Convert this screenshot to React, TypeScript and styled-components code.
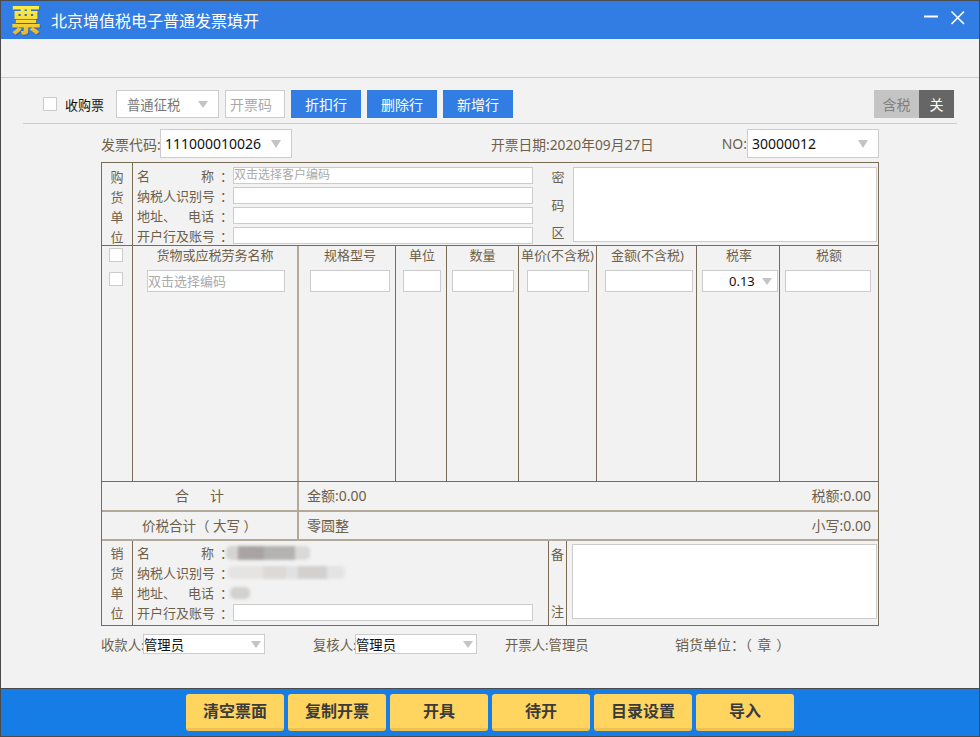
import { createGlobalStyle, styled } from 'styled-components'

const GlobalStyle = createGlobalStyle`
  html, body {
    margin: 0;
    padding: 0;
    background: #f2f2f2;
  }
  * {
    box-sizing: border-box;
  }
  body {
    font-family: "Noto Sans", "Noto Sans CJK SC", sans-serif;
    font-size: 13px;
    color: #6e5f4a;
  }
`

const LINE = '#7b6c55'
const SOFT_LINE = '#b3a999'

const Window = styled.div`
  width: 980px;
  height: 737px;
  display: flex;
  flex-direction: column;
  border: 1px solid #4a4a4a;
  background: #f2f2f2;
  overflow: hidden;
`

const TitleBar = styled.div`
  height: 38px;
  flex: none;
  display: flex;
  align-items: center;
  padding: 0 14px 0 10px;
  background: #317de3;
  color: #fff;
`

const Logo = styled.div`
  width: 30px;
  font-size: 30px;
  font-weight: 900;
  line-height: 38px;
  margin-right: 10px;
  background: linear-gradient(180deg, #fff44a 0%, #f7dc3a 50%, #e2a62c 100%);
  -webkit-background-clip: text;
  background-clip: text;
  color: transparent;
  filter: drop-shadow(1px 1px 0 rgba(60, 60, 60, 0.35));
`

const Title = styled.div`
  flex: 1;
  font-size: 16px;
`

const WindowIcons = styled.svg`
  display: block;
  margin-bottom: 4px;
`

const Band = styled.div`
  height: 39px;
  flex: none;
  border-bottom: 1px solid #cccccc;
`

const Toolbar = styled.div`
  height: 46px;
  margin: 0 22px;
  padding: 12px 3px 0 20px;
  flex: none;
  display: flex;
  align-items: flex-start;
  border-bottom: 1px solid #cccccc;
  font-size: 14px;
`

const CheckBox = styled.span`
  display: block;
  flex: none;
  width: 14px;
  height: 14px;
  background: #fff;
  border: 1px solid #cccccc;
`

const BuyLabel = styled.label`
  display: flex;
  align-items: center;
  gap: 8px;
  width: 73px;
  height: 28px;
  font-size: 13px;
  color: #111;
`

const Select = styled.div<{ $w: number; $h: number; $left: number; $right: number; $dark?: boolean; $size?: number }>`
  flex: none;
  width: ${(p) => p.$w}px;
  height: ${(p) => p.$h}px;
  display: flex;
  align-items: center;
  justify-content: space-between;
  padding: 0 ${(p) => p.$right}px 0 ${(p) => p.$left}px;
  background: #fff;
  border: 1px solid #cccccc;
  color: ${(p) => (p.$dark ? '#111' : '#777')};
  font-size: ${(p) => (p.$size ? `${p.$size}px` : 'inherit')};
`

const Caret = styled.i`
  display: block;
  flex: none;
  width: 0;
  height: 0;
  border-left: 5.5px solid transparent;
  border-right: 5.5px solid transparent;
  border-top: 8px solid #c4c4c4;
`

const SmallCaret = styled(Caret)`
  border-left-width: 5px;
  border-right-width: 5px;
  border-top-width: 7px;
`

const CodeInput = styled.div`
  width: 60px;
  height: 28px;
  margin: 0 6px;
  flex: none;
  display: flex;
  align-items: center;
  padding-left: 4px;
  background: #fff;
  border: 1px solid #cccccc;
  color: #aaaaaa;
`

const ToolButton = styled.button`
  width: 70px;
  height: 28px;
  margin-right: 6px;
  flex: none;
  border: 0;
  padding: 0;
  background: #317de3;
  color: #fff;
  font: inherit;
`

const Toggle = styled.div`
  margin-left: auto;
  height: 28px;
  display: flex;
`

const ToggleSide = styled.div<{ $on?: boolean }>`
  width: ${(p) => (p.$on ? 35 : 45)}px;
  display: flex;
  align-items: center;
  justify-content: center;
  background: ${(p) => (p.$on ? '#666666' : '#c4c4c4')};
  color: ${(p) => (p.$on ? '#fff' : '#808080')};
`

const Sheet = styled.div`
  width: 778px;
  margin-left: 100px;
  flex: 1;
`

const MetaRow = styled.div`
  height: 29px;
  margin-top: 5px;
  margin-bottom: 4px;
  display: flex;
  align-items: center;
  white-space: nowrap;
  font-size: 14px;
`

const MetaLabel = styled.div`
  width: 59px;
  flex: none;
`

const DateText = styled.div`
  margin-left: 199px;
  width: 231px;
  font-size: 13.75px;
`

const Invoice = styled.div`
  border: 1px solid ${LINE};
`

const PartyRow = styled.div<{ $h: number }>`
  height: ${(p) => p.$h}px;
  display: flex;
  border-bottom: 1px solid ${LINE};
  &:last-child {
    border-bottom: 0;
  }
`

const SideTitle = styled.div<{ $top: number }>`
  width: 31px;
  flex: none;
  display: flex;
  flex-direction: column;
  align-items: center;
  justify-content: space-between;
  padding: ${(p) => p.$top}px 0 3px;
  border-right: 1px solid ${LINE};
  line-height: 20px;
`

const Fields = styled.div<{ $w: number; $top: number }>`
  width: ${(p) => p.$w}px;
  flex: none;
  padding: ${(p) => p.$top}px 0 0 4px;
  display: flex;
  flex-direction: column;
  gap: 3px;
`

const Field = styled.div`
  height: 17px;
  display: flex;
  align-items: center;
`

const FieldLabel = styled.div`
  width: 96px;
  flex: none;
  display: flex;
  line-height: 16px;
  white-space: nowrap;
`

const LabelWords = styled.div`
  width: 77px;
  flex: none;
  display: flex;
  justify-content: space-between;
`

const Colon = styled.span`
  margin-left: 6px;
`

const FieldInput = styled.div`
  width: 300px;
  height: 17px;
  flex: none;
  background: #fff;
  border: 1px solid #cccccc;
  color: #aaaaaa;
  font-size: 12px;
  line-height: 14px;
`

const Smudge = styled.div<{ $w: number; $h: number; $shift: number; $tone: string }>`
  width: ${(p) => p.$w}px;
  height: ${(p) => p.$h}px;
  margin-left: ${(p) => p.$shift}px;
  flex: none;
  border-radius: 5px;
  background: ${(p) => p.$tone};
  filter: blur(1.5px);
`

const CipherTitle = styled.div`
  width: 30px;
  flex: none;
  display: flex;
  flex-direction: column;
  align-items: center;
  justify-content: space-between;
  padding: 4px 0 3px;
  line-height: 20px;
`

const NoteTitle = styled.div`
  width: 19px;
  flex: none;
  display: flex;
  flex-direction: column;
  align-items: center;
  justify-content: space-between;
  padding: 3px 0 4px;
  line-height: 20px;
  border-left: 1px solid ${LINE};
  border-right: 1px solid ${LINE};
`

const BigBox = styled.div<{ $w: number; $h: number; $left: number; $top: number }>`
  width: ${(p) => p.$w}px;
  height: ${(p) => p.$h}px;
  margin: ${(p) => p.$top}px 0 0 ${(p) => p.$left}px;
  background: #fff;
  border: 1px solid #cccccc;
`

const Items = styled.div`
  height: 236px;
  display: grid;
  grid-template-columns: 31px 166px 97px 51px 72px 78px 100px 83px 98px;
  border-bottom: 1px solid ${LINE};
`

const ItemCol = styled.div<{ $soft?: boolean; $pad?: number }>`
  display: flex;
  flex-direction: column;
  align-items: center;
  padding-left: ${(p) => p.$pad ?? 0}px;
  border-right: ${(p) => (p.$soft ? '2px' : '1px')} solid ${(p) => (p.$soft ? SOFT_LINE : LINE)};
  white-space: nowrap;
  &:last-child {
    border-right: 0;
  }
`

const CheckCol = styled(ItemCol)`
  padding: 2px 2px 0 0;
  gap: 10px;
`

const ColTitle = styled.div`
  height: 24px;
  line-height: 19px;
`

const CellInput = styled.div<{ $w: number; $shift?: number }>`
  width: ${(p) => p.$w}px;
  height: 22px;
  margin-left: ${(p) => p.$shift ?? 0}px;
  padding-bottom: 2px;
  flex: none;
  display: flex;
  align-items: center;
  background: #fff;
  border: 1px solid #cccccc;
  color: #aaaaaa;
`

const RateSelect = styled.div`
  width: 76px;
  height: 22px;
  margin-left: 2px;
  display: flex;
  align-items: center;
  justify-content: space-between;
  padding: 0 5px 0 26px;
  background: #fff;
  border: 1px solid #cccccc;
  color: #111;
`

const SumRow = styled.div<{ $h: number }>`
  height: ${(p) => p.$h}px;
  display: flex;
  border-bottom: 2px solid ${SOFT_LINE};
  font-size: 14px;
`

const SumLabel = styled.div<{ $gap?: number; $size?: number }>`
  width: 197px;
  flex: none;
  display: flex;
  align-items: center;
  justify-content: center;
  gap: ${(p) => p.$gap ?? 0}px;
  padding-bottom: 2px;
  white-space: pre;
  font-size: ${(p) => p.$size ?? 14}px;
  border-right: 2px solid ${SOFT_LINE};
`

const SumValue = styled.div`
  flex: 1;
  display: flex;
  align-items: center;
  justify-content: space-between;
  padding: 0 7px 2px 8px;
`

const SignRow = styled.div`
  height: 20px;
  margin-top: 8px;
  display: flex;
  align-items: center;
  white-space: nowrap;
  font-size: 13.33px;
`

const SignGroup = styled.div<{ $w: number }>`
  width: ${(p) => p.$w}px;
  flex: none;
  display: flex;
  align-items: center;
`

const SignLabel = styled.span`
  width: 42px;
  flex: none;
`

const StampText = styled.div`
  font-size: 14px;
  white-space: pre;
  word-spacing: 1.5px;
`

const Footer = styled.div`
  height: 48px;
  flex: none;
  display: flex;
  justify-content: center;
  gap: 4px;
  padding: 5px 0;
  border-top: 1px solid #4a4a4a;
  background: #157de5;
`

const ActionButton = styled.button`
  width: 98px;
  height: 37px;
  padding: 0 0 2px;
  border: 0;
  border-bottom: 3px solid #eec252;
  border-radius: 3px;
  background: #ffd45f;
  color: #3b3b3b;
  font: inherit;
  font-size: 16px;
  font-weight: 700;
`

function SpreadLabel({ left, right = '' }: { left: string; right?: string }) {
  return (
    <FieldLabel>
      <LabelWords>
        <span>{left}</span>
        <span>{right}</span>
      </LabelWords>
      <Colon>：</Colon>
    </FieldLabel>
  )
}

const ACTIONS = ['清空票面', '复制开票', '开具', '待开', '目录设置', '导入']

export default function App() {
  return (
    <>
      <GlobalStyle />
      <Window>
        <TitleBar>
          <Logo>票</Logo>
          <Title>北京增值税电子普通发票填开</Title>
          <WindowIcons width="41" height="16" viewBox="0 0 41 16" fill="none" stroke="#fff">
            <path d="M0 6.5h14" strokeWidth="2" />
            <path d="M27.5 1.5l12.5 12.5M40 1.5L27.5 14" strokeWidth="1.6" />
          </WindowIcons>
        </TitleBar>
        <Band />
        <Toolbar>
          <BuyLabel>
            <CheckBox />
            收购票
          </BuyLabel>
          <Select $w={103} $h={28} $left={10} $right={10} $size={13.33}>
            普通征税
            <SmallCaret />
          </Select>
          <CodeInput>开票码</CodeInput>
          <ToolButton>折扣行</ToolButton>
          <ToolButton>删除行</ToolButton>
          <ToolButton>新增行</ToolButton>
          <Toggle>
            <ToggleSide>含税</ToggleSide>
            <ToggleSide $on>关</ToggleSide>
          </Toggle>
        </Toolbar>
        <Sheet>
          <MetaRow>
            <MetaLabel>发票代码:</MetaLabel>
            <Select $w={132} $h={29} $left={4} $right={10} $dark>
              111000010026
              <Caret />
            </Select>
            <DateText>开票日期:2020年09月27日</DateText>
            NO:
            <Select $w={132} $h={29} $left={4} $right={10} $dark>
              30000012
              <Caret />
            </Select>
          </MetaRow>
          <Invoice>
            <PartyRow $h={83}>
              <SideTitle $top={4}>
                <span>购</span>
                <span>货</span>
                <span>单</span>
                <span>位</span>
              </SideTitle>
              <Fields $w={410} $top={4}>
                <Field>
                  <SpreadLabel left="名" right="称" />
                  <FieldInput>双击选择客户编码</FieldInput>
                </Field>
                <Field>
                  <SpreadLabel left="纳税人识别号" />
                  <FieldInput />
                </Field>
                <Field>
                  <SpreadLabel left="地址、" right="电话" />
                  <FieldInput />
                </Field>
                <Field>
                  <SpreadLabel left="开户行及账号" />
                  <FieldInput />
                </Field>
              </Fields>
              <CipherTitle>
                <span>密</span>
                <span>码</span>
                <span>区</span>
              </CipherTitle>
              <BigBox $w={304} $h={75} $left={0} $top={4} />
            </PartyRow>
            <Items>
              <CheckCol>
                <CheckBox />
                <CheckBox />
              </CheckCol>
              <ItemCol $soft>
                <ColTitle>货物或应税劳务名称</ColTitle>
                <CellInput $w={138} $shift={2}>双击选择编码</CellInput>
              </ItemCol>
              <ItemCol $pad={6}>
                <ColTitle>规格型号</ColTitle>
                <CellInput $w={80} />
              </ItemCol>
              <ItemCol $pad={2}>
                <ColTitle>单位</ColTitle>
                <CellInput $w={38} />
              </ItemCol>
              <ItemCol>
                <ColTitle>数量</ColTitle>
                <CellInput $w={62} />
              </ItemCol>
              <ItemCol>
                <ColTitle>单价(不含税)</ColTitle>
                <CellInput $w={62} />
              </ItemCol>
              <ItemCol $pad={2}>
                <ColTitle>金额(不含税)</ColTitle>
                <CellInput $w={88} $shift={2} />
              </ItemCol>
              <ItemCol $pad={2}>
                <ColTitle>税率</ColTitle>
                <RateSelect>
                  0.13
                  <SmallCaret />
                </RateSelect>
              </ItemCol>
              <ItemCol>
                <ColTitle>税额</ColTitle>
                <CellInput $w={86} $shift={-2} />
              </ItemCol>
            </Items>
            <SumRow $h={30}>
              <SumLabel $gap={21}>
                <span>合</span>
                <span>计</span>
              </SumLabel>
              <SumValue>
                <span>金额:0.00</span>
                <span>税额:0.00</span>
              </SumValue>
            </SumRow>
            <SumRow $h={29}>
              <SumLabel $size={13.5}>价税合计（ 大写 ）</SumLabel>
              <SumValue>
                <span>零圆整</span>
                <span>小写:0.00</span>
              </SumValue>
            </SumRow>
            <PartyRow $h={84}>
              <SideTitle $top={2}>
                <span>销</span>
                <span>货</span>
                <span>单</span>
                <span>位</span>
              </SideTitle>
              <Fields $w={415} $top={3}>
                <Field>
                  <SpreadLabel left="名" right="称" />
                  <Smudge
                    $w={84}
                    $h={14}
                    $shift={-7}
                    $tone="linear-gradient(90deg, #d6d3d0 0 14%, #a9a3a1 14% 45%, #b5b3b1 45% 82%, #dad9d8 82%)"
                  />
                </Field>
                <Field>
                  <SpreadLabel left="纳税人识别号" />
                  <Smudge
                    $w={117}
                    $h={13}
                    $shift={-5}
                    $tone="linear-gradient(90deg, #e6e4e2 0 30%, #dcd9d6 30% 50%, #e0e1e3 50% 60%, #d2d1cf 60% 85%, #e4e4e4 85%)"
                  />
                </Field>
                <Field>
                  <SpreadLabel left="地址、" right="电话" />
                  <Smudge $w={20} $h={12} $shift={-3} $tone="#d3d1cf" />
                </Field>
                <Field>
                  <SpreadLabel left="开户行及账号" />
                  <FieldInput />
                </Field>
              </Fields>
              <NoteTitle>
                <span>备</span>
                <span>注</span>
              </NoteTitle>
              <BigBox $w={305} $h={75} $left={5} $top={3} />
            </PartyRow>
          </Invoice>
          <SignRow>
            <SignGroup $w={212}>
              <SignLabel>收款人:</SignLabel>
              <Select $w={122} $h={20} $left={0} $right={3} $dark>
                管理员
                <SmallCaret />
              </Select>
            </SignGroup>
            <SignGroup $w={192}>
              <SignLabel>复核人:</SignLabel>
              <Select $w={122} $h={20} $left={0} $right={3} $dark>
                管理员
                <SmallCaret />
              </Select>
            </SignGroup>
            <SignGroup $w={170}>开票人:管理员</SignGroup>
            <SignGroup $w={130}>
              <StampText>销货单位：（ 章 ）</StampText>
            </SignGroup>
          </SignRow>
        </Sheet>
        <Footer>
          {ACTIONS.map((name) => (
            <ActionButton key={name}>{name}</ActionButton>
          ))}
        </Footer>
      </Window>
    </>
  )
}
